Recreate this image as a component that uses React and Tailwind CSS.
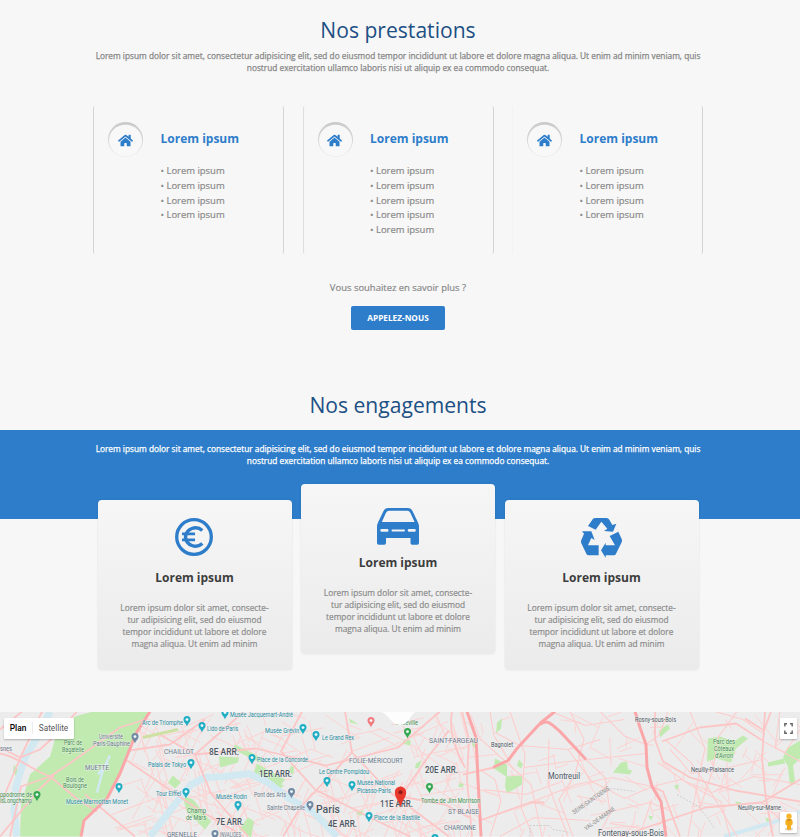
import React from "react";
import { FaHome } from "react-icons/fa";

const LOREM_A =
  "Lorem ipsum dolor sit amet, consectetur adipisicing elit, sed do eiusmod tempor incididunt ut labore et dolore magna aliqua. Ut enim ad minim veniam, quis";
const LOREM_B = "nostrud exercitation ullamco laboris nisi ut aliquip ex ea commodo consequat.";

function Intro({ className }) {
  return (
    <p className={"text-center text-[8.3px] leading-[12px] whitespace-nowrap [-webkit-text-stroke:0.25px] " + className}>
      {LOREM_A}
      <br />
      {LOREM_B}
    </p>
  );
}

function Title({ children }) {
  return (
    <h2 className="text-center text-[21.1px] leading-[30px] text-[#1d5084]">{children}</h2>
  );
}

function HomeBadge() {
  return (
    <div className="relative h-[35px] w-[35px] shrink-0">
      <svg viewBox="0 0 36 36" className="absolute inset-0 h-full w-full">
        <defs>
          <linearGradient id="ring" x1="0" y1="0" x2="0" y2="1">
            <stop offset="0" stopColor="#cacaca" />
            <stop offset="0.7" stopColor="#d8d8d8" />
            <stop offset="1" stopColor="#eeeeee" />
          </linearGradient>
        </defs>
        <circle cx="18" cy="18" r="18" fill="url(#ring)" />
        <ellipse cx="18" cy="19" rx="17" ry="16.3" fill="#f8f8f8" />
      </svg>
      <FaHome className="absolute top-[11px] left-[9.5px] h-[15px] w-[15px] text-[#2e7dca]" />
    </div>
  );
}

function Service({ count, edge }) {
  return (
    <article className={"flex h-[148px] w-[191px] rounded-[2px] border-r border-r-[#d4d4d4] border-l pt-[16px] pl-[14px] " + edge}>
      <HomeBadge />
      <div className="pt-[8px] pl-[17.5px]">
        <h3 className="text-[12px] leading-[18px] font-bold text-[#2e7dca]">Lorem ipsum</h3>
        <ul className="mt-[16px] text-[9.45px] leading-[14.75px] text-[#8a8a8a] [-webkit-text-stroke:0.2px]">
          {Array.from({ length: count }, (_, i) => (
            <li key={i}>• Lorem ipsum</li>
          ))}
        </ul>
      </div>
    </article>
  );
}

function EuroIcon() {
  return (
    <svg viewBox="0 0 38 38" className="mr-[1px] h-[38px] w-[38px]" fill="none" stroke="#2e7dca">
      <circle cx="19" cy="19" r="17.3" strokeWidth="3.3" />
      <path d="M27.3 12.5A10 10 0 0 0 10.5 19A10 10 0 0 0 27.3 25.5" strokeWidth="3.4" />
      <path d="M7 15.9h13M7 21.9h13" strokeWidth="2.8" />
    </svg>
  );
}

function CarIcon() {
  return (
    <svg viewBox="0 0 42 37" className="h-[37px] w-[42px]" fill="#2e7dca">
      <path
        fillRule="evenodd"
        d="M11 0H31Q34 0 35.5 3L41 14.5Q42 16.5 42 19V35Q42 36.7 40.3 36.7H35.2Q33.5 36.7 33.5 35V30H9V35Q9 36.7 7.3 36.7H1.7Q0 36.7 0 35V19Q0 16.5 1 14.5L6.5 3Q8 0 11 0ZM12 2.8Q10 2.8 9 4.8L4.8 14H37.6L33.3 4.8Q32.3 2.8 30.3 2.8ZM4.6 21Q3.3 21 3.3 22.4Q3.3 23.8 4.6 23.8H10.2Q11.5 23.8 11.5 22.4Q11.5 21 10.2 21ZM15.5 21.4Q14.5 21.4 14.5 22.5Q14.5 23.6 15.5 23.6H27Q28 23.6 28 22.5Q28 21.4 27 21.4ZM32 21Q30.7 21 30.7 22.4Q30.7 23.8 32 23.8H37.5Q38.8 23.8 38.8 22.4Q38.8 21 37.5 21Z"
      />
    </svg>
  );
}

function RecycleIcon() {
  return (
    <svg viewBox="258 84 123 120" className="h-[40px] w-[41px]" fill="#2e7dca">
      <path d="M279 108l14-20q3-4 8-4h34q5 0 8 5l9 16 12-4-10 24-27-2 10-7-18-21-17 24z" />
      <path d="M261 124h28l10 26-10-6-10 22h32v30h-30q-5 0-7-5l-15-31q-2-5 0-10l8-19z" />
      <path d="M344 138l26-13 10 22q2 5 0 10l-17 34q-2 5-7 5h-24v8l-14-23 14-23v8h28z" />
    </svg>
  );
}

function Commitment({ icon, className }) {
  return (
    <article
      className={
        "flex h-[170px] w-[194px] flex-col items-center rounded-[4px] bg-linear-to-b from-[#f6f6f6] to-[#ebebeb] shadow-[0_0_2px_rgba(0,0,0,0.12)] " +
        className
      }
    >
      <div className="flex h-[40px] items-start justify-center">{icon}</div>
      <h3 className="text-[12px] leading-[18px] font-bold text-[#3d3d3d]">Lorem ipsum</h3>
      <p className="mt-[15px] text-center text-[8.3px] leading-[12.1px] whitespace-nowrap text-[#8c8c8c] [-webkit-text-stroke:0.2px]">
        Lorem ipsum dolor sit amet, consecte-
        <br />
        tur adipisicing elit, sed do eiusmod
        <br />
        tempor incididunt ut labore et dolore
        <br />
        magna aliqua. Ut enim ad minim
      </p>
    </article>
  );
}

const TEAL = "#258ba0";
const SLATE = "#69798c";
const DARK = "#4c5864";
const GREEN = "#3c8e4b";

// [text, left, baseline, width, size, colour, weight]
const LABELS = [
  ["snes", 0, 751, 12, 7, SLATE],
  ["Parc de", 64, 745, 18, 7, GREEN],
  ["Bagatelle", 62, 752, 22, 7, GREEN],
  ["Université", 99, 739, 24, 7, SLATE],
  ["Paris-Dauphine", 93, 746, 37, 7, SLATE],
  ["Arc de Triomphe", 142, 725, 41, 7.6, TEAL],
  ["CHAILLOT", 164, 754.5, 30, 6.5, SLATE],
  ["Palais de Tokyo", 148, 767.5, 38, 7.6, TEAL],
  ["MUETTE", 85, 770.5, 24, 6.5, SLATE],
  ["Bois de", 66, 782, 18, 7, GREEN],
  ["Boulogne", 63, 788.5, 24, 7, GREEN],
  ["ppodrome de", 0, 797, 32, 7, GREEN],
  ["isLongchamp", 0, 803.5, 32, 7, GREEN],
  ["Musée Marmottan Monet", 66, 804, 62, 7.6, TEAL],
  ["Tour Eiffel", 156, 796.5, 25, 7.6, TEAL],
  ["Champ", 187, 813, 19, 7, GREEN],
  ["de Mars", 186, 820, 20, 7, GREEN],
  ["GRENELLE", 167, 837.5, 30, 6.5, SLATE],
  ["Musée Jacquemart-André", 230, 717, 63, 7.4, TEAL],
  ["Lido de Paris", 207, 731.5, 31, 7.6, TEAL],
  ["Musée Grévin", 265, 733.5, 34, 7.6, TEAL],
  ["Le Grand Rex", 322, 740, 32, 7.6, TEAL],
  ["8E ARR.", 209, 755, 30, 8.6, DARK, 500],
  ["Place de la Concorde", 257, 762.5, 51, 7.6, TEAL],
  ["FOLIE-MÉRICOURT", 349, 763, 54, 6.5, SLATE],
  ["1ER ARR.", 259, 777.5, 33, 8.6, DARK, 500],
  ["Le Centre Pompidou", 319, 774.5, 50, 7.6, TEAL],
  ["Musée National", 357, 785.6, 38, 7, TEAL],
  ["Picasso-Paris", 357, 793, 34, 7, TEAL],
  ["Pont des Arts", 254, 797, 32, 7.4, SLATE],
  ["Musée Rodin", 216, 799, 31, 7.4, TEAL],
  ["Sainte Chapelle", 267, 810, 38, 7.6, SLATE],
  ["Paris", 316, 813, 24, 11, DARK, 500],
  ["7E ARR.", 216, 825, 28, 8.6, DARK, 500],
  ["4E ARR.", 328, 827.5, 29, 8.6, DARK, 500],
  ["11E ARR.", 380, 807, 33, 8.6, DARK, 500],
  ["Place de la Bastille", 374, 820.5, 46, 7.6, TEAL],
  ["INVALIDES", 220, 837.5, 21, 6.5, SLATE],
  ["Belleville", 396, 725, 22, 7.6, GREEN],
  ["SAINT-FARGEAU", 429, 743, 49, 6.5, SLATE],
  ["Bagnolet", 491, 747.5, 22, 7.8, DARK],
  ["20E ARR.", 425, 773.5, 33, 8.6, DARK, 500],
  ["Tombe de Jim Morrison", 421, 803.5, 59, 7.6, GREEN],
  ["ST BLAISE", 448, 814, 31, 6.5, SLATE],
  ["CHARONNE", 444, 830, 32, 6.5, SLATE],
  ["Montreuil", 548, 779, 32, 8.8, DARK],
  ["Rosny-sous-Bois", 635, 722.5, 41, 7.6, DARK],
  ["Parc des", 713, 744.3, 22, 6.9, GREEN],
  ["Côteaux", 714, 751.5, 20, 6.9, GREEN],
  ["d’Avron", 715, 758.7, 18, 6.9, GREEN],
  ["Neuilly-Plaisance", 691, 772, 43, 7.6, DARK],
  ["Neuilly-sur-Marne", 738, 810.5, 43, 7.6, DARK],
  ["Fontenay-sous-Bois", 598, 836, 66, 8.8, DARK],
];

// [x, y of the tip, colour]
const PINS = [
  [187, 727, "#21adc4"],
  [225, 720, "#21adc4"],
  [202, 733, "#21adc4"],
  [135, 744, "#7189a3"],
  [191, 770, "#21adc4"],
  [119, 794, "#21adc4"],
  [186, 799, "#21adc4"],
  [37, 802, "#36a852"],
  [303, 735, "#21adc4"],
  [316, 742, "#21adc4"],
  [252, 765, "#21adc4"],
  [327, 788, "#21adc4"],
  [352, 792, "#21adc4"],
  [238, 812, "#21adc4"],
  [291.5, 799, "#7189a3"],
  [310, 812, "#7189a3"],
  [215, 841, "#7189a3"],
  [369, 823, "#21adc4"],
  [371, 728, "#f07c80"],
  [407.5, 739, "#36a852"],
  [429.5, 794, "#36a852"],
  [435, 845, "#21adc4"],
];

const PARKS = [
  "M93 712H148L142 724 130 745 119 778 108 797 84 821 82 837H20L21 805 30 775 50 757 58 730 75 717z",
  "M14 765l6 8-2 7-5-8z",
  "M173 776l8 7-6 6-7-6z",
  "M182 796l11 4 18 22-6 8-18-18z",
  "M235 745l28 14-3 4-27-13z",
  "M257 764l28 16-7 9-25-14z",
  "M275 783l9 3-6 5z",
  "M219 757l20 1-1 5-18 5z",
  "M291 766l3 2-1 8-4-5z",
  "M349 719l10 6-9-2z",
  "M357 812l6-1-1 5-5-1z",
  "M248 818l6 4-3 16-12-8z",
  "M404 740l7 1-1 5-8-2z",
  "M472 739l5 3-1 8-4-5z",
  "M460 783l4 2-2 3-4-1z",
  "M495 759l12 6v12l15-1v9l-15 9-2-7 1-10-12-8z",
  "M497 723l5-4-1 10-5 5z",
  "M519 760l4 5-2 4-4-3z",
  "M416 764l6-3-3 7-4 1z",
  "M613 773l8-10 6-1 1 8 4 1-2 4-17-2z",
  "M659 731l9-6 2 4-10 9z",
  "M708 739l12-2 14 5 9-6 5 3-12 10-5 14-15-4-9 3z",
  "M787 749l13-8v18l-7 7 2 16-5 5-2-20-5-9z",
  "M768 763l16-4 1 5-17 3z",
  "M765 818l6 2-3 4z",
  "M735 802l6 1-2 5z",
  "M674 786l5-1-2 6z",
  "M648 816l5 1-2 4z",
];

const MAJOR = [
  "M150 712L136 734 120 774 107 799 84 821 81 837",
  "M467 712L476 738 478 780 481 837",
  "M493 768L508 761 517 749 528 737 541 723 555 712",
  "M540 725C546 720 549 722 560 732L586 760",
  "M635 712L640 728 646 745 647 768 652 787 661 802 666 837",
];

const MEDIUM = [
  "M0 754C20 758 31 770 50 777L71 763 120 728 145 720",
  "M0 748L20 758 40 750 54 737 77 712",
  "M0 730L22 712M42 712L20 759 1 804",
  "M50 777L78 800 97 812M50 777L21 787 10 837",
  "M462 712L469 740 467 780 472 837",
  "M463 775L494 768M480 821L530 803 544 803",
  "M452 712C449 730 453 746 465 768",
  "M620 837L705 808 762 803 800 780",
  "M652 787L663 792 680 837",
  "M765 712L762 760 766 800 773 837",
  "M745 719L764 731 771 712",
  "M655 712V740L663 762 690 778 735 791 800 802",
  "M662 742L700 728 736 724 764 742",
  "M0 837L39 790 54 776M85 795L135 837",
  "M130 751L170 745 205 720M127 761L200 811 244 837",
  "M158 734L195 755 256 749 326 766 398 748 440 712",
  "M195 755L244 712M195 755L211 794 248 837",
  "M345 712L352 753 389 792 449 837M352 753L301 807 283 837",
  "M401 797L429 756 449 731M401 797L445 805 469 818",
  "M302 712L281 752 315 790 374 820 410 837",
];

const MINOR = [
  "M510 712L525 755 521 808 533 837M495 733L520 746 568 750 600 740",
  "M524 768L569 762 645 754M549 740L548 785 568 837",
  "M568 750L592 782 625 799 652 787M480 739L531 785 542 837",
  "M600 712L625 737 646 745 659 736 668 712",
  "M570 712L584 740 575 775 559 800 573 837M530 803L576 785 612 778 652 787",
  "M652 787L681 780 712 793 754 777 800 785M690 712L705 749 697 786 688 837",
  "M665 740L690 762 708 788 737 837M700 808L713 770 718 738 737 712",
  "M762 760L725 769 691 774 681 762 670 750M762 803L780 820 800 829",
  "M730 837L721 802 691 786 658 763M763 742L785 753 800 730",
  "M598 837L611 812 650 803 672 812M610 824L642 829 652 800",
  "M490 837L501 802 495 780 480 770M484 790L526 795 562 782",
  "M551 712L585 726 624 720M586 760L605 778 610 812",
  "M490 712L494 736 508 760M500 837L534 818 590 821",
  "M715 712L743 720 765 735M780 712L775 748 800 762",
];

// Deterministic fine street pattern for the dense inner districts.
function streetMesh() {
  let seed = 17;
  const rnd = () => {
    seed = (seed * 16807) % 2147483647;
    return seed / 2147483647;
  };
  const lines = [];
  for (let i = 0; i < 300; i++) {
    const x = 132 + rnd() * 340;
    const y = 712 + rnd() * 125;
    const a = (Math.floor(rnd() * 4) * Math.PI) / 4 + 0.3 + rnd() * 0.35;
    const l = 12 + rnd() * 33;
    lines.push(`M${x.toFixed(1)} ${y.toFixed(1)}l${(Math.cos(a) * l).toFixed(1)} ${(Math.sin(a) * l).toFixed(1)}`);
  }
  for (let i = 0; i < 120; i++) {
    const x = 475 + rnd() * 325;
    const y = 712 + rnd() * 125;
    const a = rnd() * Math.PI;
    const l = 10 + rnd() * 26;
    lines.push(`M${x.toFixed(1)} ${y.toFixed(1)}l${(Math.cos(a) * l).toFixed(1)} ${(Math.sin(a) * l).toFixed(1)}`);
  }
  return lines.join("");
}

const MESH = streetMesh();

function CityMap() {
  return (
    <svg viewBox="0 712.5 800 124.5" className="block h-full w-full" fontFamily="Roboto, sans-serif">
      <rect x="0" y="712" width="800" height="125" fill="#ececec" />
      <path d={MESH} fill="none" stroke="#fdd3d3" strokeWidth="1" />
      <g fill="#c0eab0">
        {PARKS.map((d) => (
          <path key={d} d={d} />
        ))}
      </g>
      <g fill="none" stroke="#d3e9f1">
        <path d="M50 712L39 735 25 758 16 787 14 810 17 837" strokeWidth="7" />
        <path d="M150 837L174 806 191 785 205 778 225 777 249 774 268 783 289 799 312 811 337 837" strokeWidth="7" />
        <path d="M110 756L103 770 97 793M98 775L108 763" strokeWidth="2.5" />
        <path d="M724 837L752 829 782 820 800 812" strokeWidth="4" />
      </g>
      <g fill="none" stroke="#fdcdcd" strokeWidth="1.1">
        {MINOR.map((d) => (
          <path key={d} d={d} />
        ))}
      </g>
      <g fill="none" stroke="#fcc6c6" strokeWidth="1.8" strokeLinejoin="round">
        {MEDIUM.map((d) => (
          <path key={d} d={d} />
        ))}
      </g>
      <path d="M143 738L178 730" stroke="#cfe0a4" strokeWidth="3" />
      <g fill="none" stroke="#fba7a9" strokeWidth="3" strokeLinejoin="round">
        {MAJOR.map((d) => (
          <path key={d} d={d} />
        ))}
      </g>
      <path d="M530 837V826H549L553 830 570 833M598 797L612 789 635 792M677 795L700 808 714 828" fill="none" stroke="#c2c2c2" strokeWidth="0.7" strokeDasharray="2 1.5" />
      <g stroke="#f3f3f3" strokeOpacity="0.7" strokeWidth="1.2" paintOrder="stroke">
        {LABELS.map(([text, x, y, width, size, fill, weight]) => (
          <text key={text} x={x} y={y} fontSize={size} fill={fill} fontWeight={weight || 400} textLength={width} lengthAdjust="spacingAndGlyphs">
            {text}
          </text>
        ))}
      </g>
      <g fontSize="6" fill="#8b8b8b">
        <text transform="translate(574 815) rotate(-35)" textLength="44" lengthAdjust="spacingAndGlyphs">SEINE-SAINT-DENIS</text>
        <text transform="translate(586 831) rotate(-35)" textLength="36" lengthAdjust="spacingAndGlyphs">VAL-DE-MARNE</text>
      </g>
      {PINS.map(([x, y, fill]) => (
        <g key={x + "-" + y} transform={`translate(${x} ${y})`}>
          <path d="M0 0C-.6-2.6-3.5-4-3.5-6.9a3.5 3.5 0 1 1 7 0C3.5-4 .6-2.6 0 0z" fill={fill} />
          <circle cy="-6.9" r="1.4" fill="#f2fbfb" />
        </g>
      ))}
      <g transform="translate(400.5 808)">
        <path d="M0 0C-.8-6.5-5.7-9.5-5.7-15.3a5.7 5.7 0 1 1 11.4 0C5.7-9.5.8-6.5 0 0z" fill="#e8392d" />
        <circle cy="-15.3" r="2" fill="#8d1b14" />
      </g>
      <path d="M380 712C388 714 391 725 400 725.5 409 725 411 714 416 712z" fill="#fdfdfd" />
    </svg>
  );
}

function FullscreenIcon() {
  return (
    <svg viewBox="0 0 9 11" className="h-[11px] w-[9px]" fill="none" stroke="#666666" strokeWidth="1.4">
      <path d="M.8 3.5V.8H3M6 .8h2.2v2.7M8.2 7.5v2.7H6M3 10.2H.8V7.5" />
    </svg>
  );
}

function PegmanIcon() {
  return (
    <svg viewBox="0 0 10 18" className="h-[18px] w-[10px]">
      <ellipse cx="5" cy="16" rx="4" ry="1.5" fill="#d9d2bd" />
      <path d="M2.8 5.8h4.4L8.6 8v3.5l-1.3.4-.5 4.8H3.2l-.5-4.8-1.3-.4V8z" fill="#f3ae20" />
      <path d="M2.7 6.3L5 8.3l2.3-2z" fill="#c9821a" />
      <circle cx="5" cy="3.2" r="2.6" fill="#f6b426" />
    </svg>
  );
}

export default function App() {
  return (
    <main className="flex h-[837px] w-[800px] flex-col overflow-hidden bg-[#f7f7f7] font-['Open_Sans',sans-serif]">
      <section className="flex flex-col items-center pt-[15px] pr-[4px]">
        <Title>Nos prestations</Title>
        <Intro className="mt-[5px] text-[#878787]" />
        <div className="mt-[32px] flex gap-[18.5px]">
          <Service count={4} edge="border-l-[#d4d4d4]" />
          <Service count={5} edge="border-l-[#dedede]" />
          <Service count={4} edge="border-l-[#f3f3f3]" />
        </div>
        <p className="mt-[26px] text-[9.45px] leading-[15px] text-[#8a8a8a] [-webkit-text-stroke:0.2px]">Vous souhaitez en savoir plus ?</p>
        <button className="mt-[10.5px] h-[24px] w-[94px] rounded-[2px] bg-[#2e7dca] text-[8.25px] leading-[24px] font-bold text-white">
          APPELEZ-NOUS
        </button>
      </section>

      <section className="pt-[60px]">
        <div className="pr-[4px]">
          <Title>Nos engagements</Title>
        </div>
        <div className="mt-[10px] h-[89px] bg-[#2e7dca] pt-[13px] pr-[4px]">
          <Intro className="text-white" />
        </div>
        <div className="relative -mt-[35px] flex justify-center gap-[9.5px] pr-[4px]">
          <Commitment icon={<EuroIcon />} className="mt-[16px] pt-[18px] *:[h3]:mt-[11px]" />
          <Commitment icon={<CarIcon />} className="pt-[24px] *:[h3]:mt-[6px]" />
          <Commitment icon={<RecycleIcon />} className="mt-[16px] pt-[18px] *:[h3]:mt-[11px]" />
        </div>
      </section>

      <section className="relative mt-[42.5px] h-[124.5px] shrink-0">
        <CityMap />
        <div className="absolute top-[5.5px] left-[4px] flex h-[21px] items-center rounded-[1px] bg-white font-[Roboto] shadow-[0_1px_2px_rgba(0,0,0,0.25)]">
          <span className="w-[29px] border-r border-[#ececec] text-center text-[8.4px] font-medium text-black">Plan</span>
          <span className="w-[41px] text-center text-[8.2px] text-[#565656]">Satellite</span>
        </div>
        <div className="absolute top-[5.5px] right-[3px] flex h-[21px] w-[17px] items-center justify-center rounded-[1px] bg-white shadow-[0_1px_2px_rgba(0,0,0,0.25)]">
          <FullscreenIcon />
        </div>
        <div className="absolute top-[99.5px] right-[3px] flex h-[21px] w-[17px] items-center justify-center rounded-[1px] bg-white shadow-[0_1px_2px_rgba(0,0,0,0.25)]">
          <PegmanIcon />
        </div>
      </section>
    </main>
  );
}
